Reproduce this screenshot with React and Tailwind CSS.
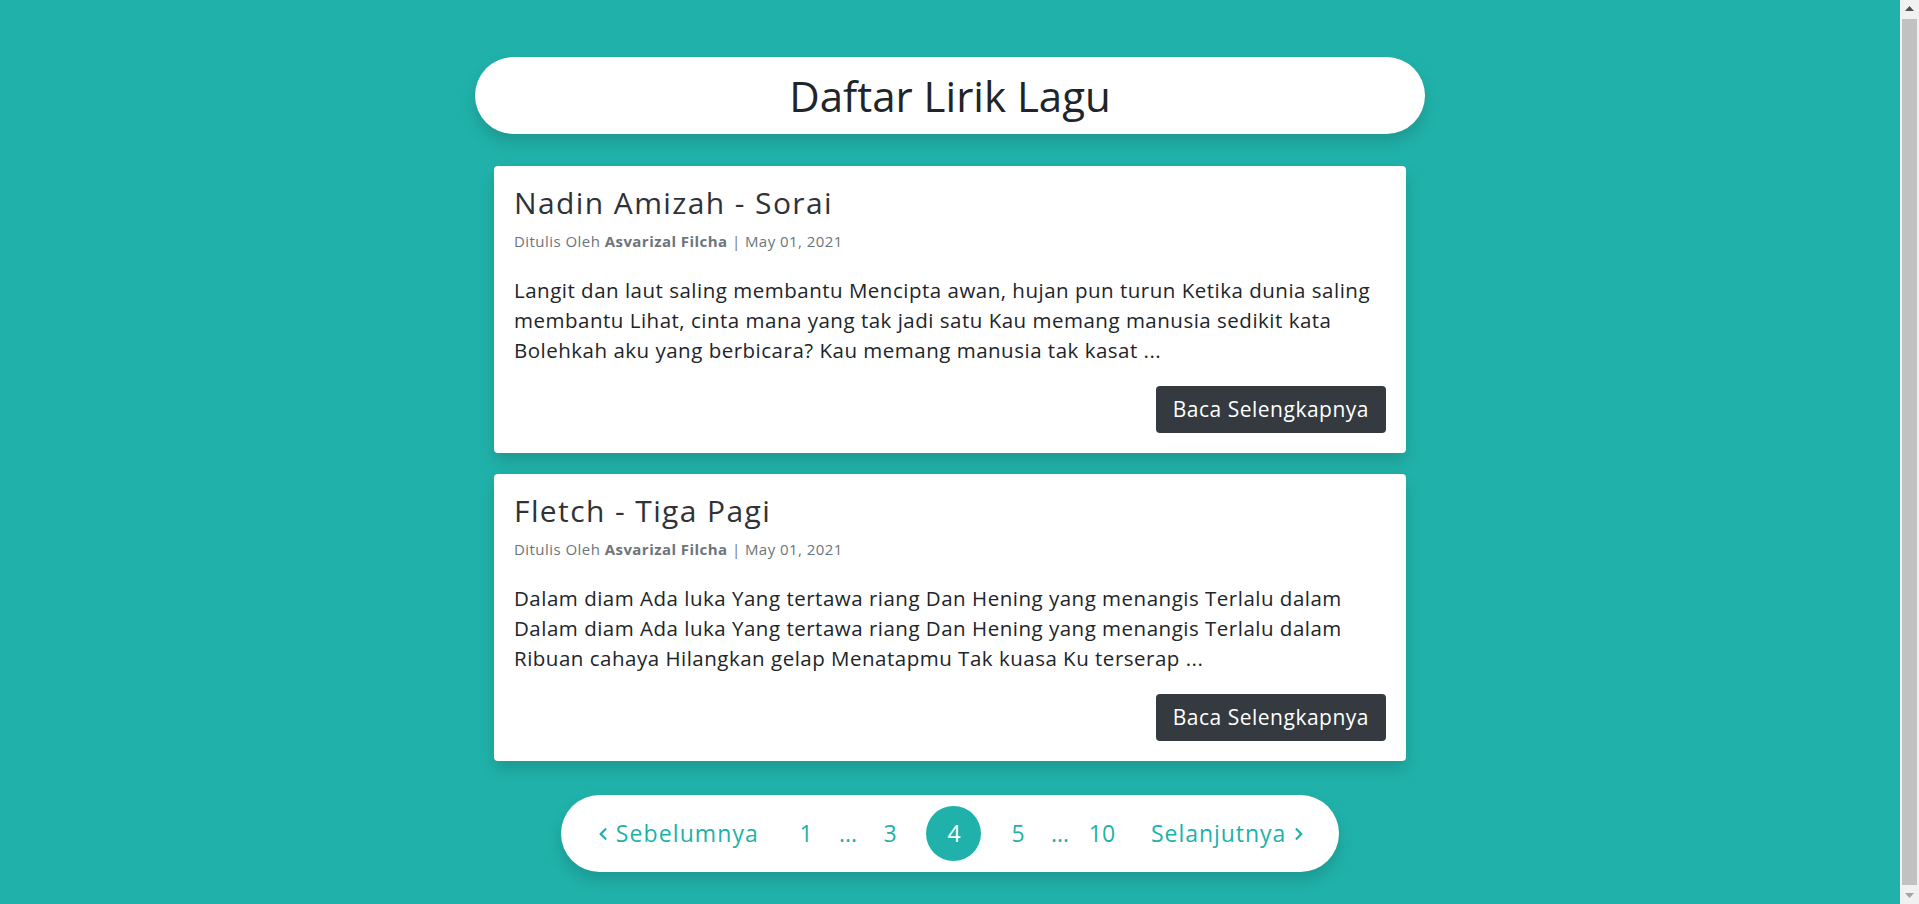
import { FaChevronLeft, FaChevronRight } from "react-icons/fa";

const songs = [
  {
    title: "Nadin Amizah - Sorai",
    author: "Asvarizal Filcha",
    date: "May 01, 2021",
    excerpt:
      "Langit dan laut saling membantu Mencipta awan, hujan pun turun Ketika dunia saling membantu Lihat, cinta mana yang tak jadi satu Kau memang manusia sedikit kata Bolehkah aku yang berbicara? Kau memang manusia tak kasat ...",
  },
  {
    title: "Fletch - Tiga Pagi",
    author: "Asvarizal Filcha",
    date: "May 01, 2021",
    excerpt:
      "Dalam diam Ada luka Yang tertawa riang Dan Hening yang menangis Terlalu dalam Dalam diam Ada luka Yang tertawa riang Dan Hening yang menangis Terlalu dalam Ribuan cahaya Hilangkan gelap Menatapmu Tak kuasa Ku terserap ...",
  },
];

function SongCard({ song }) {
  return (
    <div className="w-[912px] rounded-[4px] bg-white shadow-[0_8px_16px_rgba(0,0,0,0.15)]">
      <div className="p-[20px]">
        <h3 className="text-[30px] leading-[34px] font-normal tracking-[1.4px] text-[#2f3337]">{song.title}</h3>
        <p className="mt-[11px] text-[15px] leading-[21px] tracking-[0.45px] text-[#6c757d]">
          Ditulis Oleh <b className="font-bold">{song.author}</b> | {song.date}
        </p>
        <p className="mt-[23px] text-[20.5px] leading-[30px] tracking-[0.5px] text-[#212529]">{song.excerpt}</p>
        <div className="mt-[21px] flex justify-end">
          <a
            href="#"
            className="flex h-[47px] items-center rounded-[4px] bg-[#343a40] px-[17px] text-[21px] tracking-[0.5px] text-white"
          >
            Baca Selengkapnya
          </a>
        </div>
      </div>
    </div>
  );
}

function Pagination() {
  const text = "text-[23px] text-[#20b2aa]";
  const num = `${text} w-[42px] text-center`;
  return (
    <nav className="inline-flex h-[77px] items-center rounded-full bg-white pl-[37px] pr-[35px] shadow-[0_8px_16px_rgba(0,0,0,0.15)]">
      <a href="#" className={`${text} mr-[26px] flex items-center gap-[8px] tracking-[1.1px]`}>
        <FaChevronLeft className="h-[14px] w-[10px]" />
        Sebelumnya
      </a>
      <a href="#" className={num}>1</a>
      <span className={num}>...</span>
      <a href="#" className={num}>3</a>
      <span className="flex w-[86px] justify-center">
        <span className="flex h-[55px] w-[55px] items-center justify-center rounded-full bg-[#20b2aa] text-[23px] text-white">
          4
        </span>
      </span>
      <a href="#" className={num}>5</a>
      <span className={num}>...</span>
      <a href="#" className={num}>10</a>
      <a href="#" className={`${text} ml-[28px] flex items-center gap-[8px] tracking-[0.95px]`}>
        Selanjutnya
        <FaChevronRight className="h-[14px] w-[10px]" />
      </a>
    </nav>
  );
}

function Scrollbar() {
  return (
    <div className="flex h-screen w-[19px] shrink-0 flex-col bg-[#f1f1f1]">
      <div className="flex h-[17px] items-center justify-center">
        <svg width="9" height="5" viewBox="0 0 9 5">
          <path d="M0 5 L4.5 0 L9 5 Z" fill="#505050" />
        </svg>
      </div>
      <div className="mx-[2px] my-[2px] flex-1 bg-[#c1c1c1]" />
      <div className="flex h-[17px] items-center justify-center">
        <svg width="9" height="5" viewBox="0 0 9 5">
          <path d="M0 0 L9 0 L4.5 5 Z" fill="#a3a3a3" />
        </svg>
      </div>
    </div>
  );
}

export default function App() {
  return (
    <div className="flex h-screen overflow-hidden bg-[#20b2aa] font-['Open_Sans',sans-serif]">
      <main className="flex flex-1 flex-col items-center pb-[48px] pt-[57px]">
        <div className="flex h-[77px] w-[950px] shrink-0 items-center justify-center rounded-full bg-white shadow-[0_8px_16px_rgba(0,0,0,0.15)]">
          <h1 className="text-[42px] leading-[48px] text-[#212529]">Daftar Lirik Lagu</h1>
        </div>
        <div className="mt-[32px] flex shrink-0 flex-col gap-[21px]">
          {songs.map((s) => (
            <SongCard key={s.title} song={s} />
          ))}
        </div>
        <div className="mt-[34px] shrink-0">
          <Pagination />
        </div>
      </main>
      <Scrollbar />
    </div>
  );
}
